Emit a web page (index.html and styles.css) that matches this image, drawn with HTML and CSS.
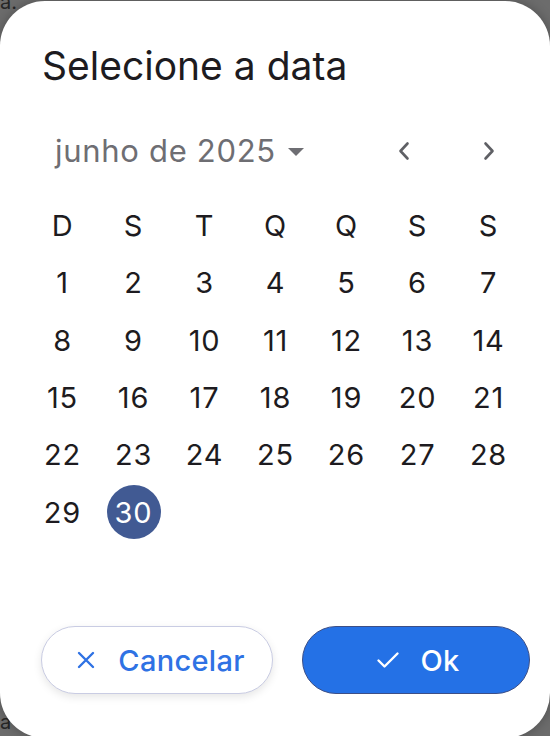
FILE: index.html
```html
<!DOCTYPE html>
<html lang="pt">
<head>
<meta charset="utf-8">
<title>Selecione a data</title>
<link rel="stylesheet" href="styles.css">
</head>
<body>
<div class="backdrop">
  <span class="bg-text bg-top">a.</span>
  <span class="bg-text bg-bottom">a</span>
</div>
<div class="dialog">
  <h1 class="title">Selecione a data</h1>
  <div class="month-row">
    <button class="month-select">
      <span>junho de 2025</span>
      <svg class="caret" width="16" height="8" viewBox="0 0 16 8"><path d="M0 0 L16 0 L8 8 Z" fill="#6e6e73"/></svg>
    </button>
    <div class="nav">
      <button class="nav-btn" aria-label="Mês anterior">
        <svg width="14" height="20" viewBox="0 0 14 20"><path d="M10.5 2.5 L3.5 10 L10.5 17.5" fill="none" stroke="#5f6065" stroke-width="2.6" stroke-linecap="round" stroke-linejoin="round"/></svg>
      </button>
      <button class="nav-btn" aria-label="Próximo mês">
        <svg width="14" height="20" viewBox="0 0 14 20"><path d="M3.5 2.5 L10.5 10 L3.5 17.5" fill="none" stroke="#5f6065" stroke-width="2.6" stroke-linecap="round" stroke-linejoin="round"/></svg>
      </button>
    </div>
  </div>
  <div class="grid">
    <div class="cell wd">D</div><div class="cell wd">S</div><div class="cell wd">T</div><div class="cell wd">Q</div><div class="cell wd">Q</div><div class="cell wd">S</div><div class="cell wd">S</div>
    <div class="cell">1</div><div class="cell">2</div><div class="cell">3</div><div class="cell">4</div><div class="cell">5</div><div class="cell">6</div><div class="cell">7</div>
    <div class="cell">8</div><div class="cell">9</div><div class="cell">10</div><div class="cell">11</div><div class="cell">12</div><div class="cell">13</div><div class="cell">14</div>
    <div class="cell">15</div><div class="cell">16</div><div class="cell">17</div><div class="cell">18</div><div class="cell">19</div><div class="cell">20</div><div class="cell">21</div>
    <div class="cell">22</div><div class="cell">23</div><div class="cell">24</div><div class="cell">25</div><div class="cell">26</div><div class="cell">27</div><div class="cell">28</div>
    <div class="cell">29</div><div class="cell"><span class="selected">30</span></div>
  </div>
  <div class="actions">
    <button class="btn btn-cancel">
      <svg width="20" height="20" viewBox="0 0 20 20"><path d="M3 3 L17 17 M17 3 L3 17" fill="none" stroke="#2f72e4" stroke-width="2.4" stroke-linecap="round"/></svg>
      <span>Cancelar</span>
    </button>
    <button class="btn btn-ok">
      <svg width="24" height="20" viewBox="0 0 24 20"><path d="M2.5 10.5 L8.5 16.5 L21.5 3.5" fill="none" stroke="#ffffff" stroke-width="2.4" stroke-linecap="round" stroke-linejoin="round"/></svg>
      <span>Ok</span>
    </button>
  </div>
</div>
</body>
</html>
```
FILE: styles.css
```css
html, body {
  margin: 0;
  padding: 0;
  width: 550px;
  height: 736px;
  overflow: hidden;
}
body {
  background: #6c6c6c;
  font-family: Inter, Roboto, "Noto Sans", sans-serif;
  position: relative;
}
.backdrop {
  position: absolute;
  inset: 0;
}
.bg-text {
  position: absolute;
  left: 0;
  color: #262626;
  font-size: 20px;
  line-height: 20px;
}
.bg-top { top: -8px; }
.bg-bottom { top: 712px; }

.dialog {
  position: relative;
  margin-top: 1px;
  width: 550px;
  height: 737px;
  box-sizing: border-box;
  background: #ffffff;
  border-radius: 45px;
  box-shadow: 0 0 12px rgba(0, 0, 0, 0.28);
  display: flex;
  flex-direction: column;
  padding: 41px 20px 44px 0;
}
.title {
  margin: 0 0 0 42px;
  font-size: 39px;
  line-height: 48px;
  font-weight: 400;
  color: #1d1b20;
}
.month-row {
  margin-top: 41px;
  height: 40px;
  display: flex;
  align-items: center;
  justify-content: space-between;
  padding-left: 55px;
  padding-right: 17px;
}
button {
  font-family: inherit;
  border: none;
  background: none;
  padding: 0;
  margin: 0;
  cursor: pointer;
}
.month-select {
  display: flex;
  align-items: center;
  gap: 12px;
  font-size: 31px;
  line-height: 40px;
  letter-spacing: 0.7px;
  color: #6e6e73;
}
.caret { margin-top: 2px; }
.nav {
  display: flex;
  gap: 37px;
}
.nav-btn {
  width: 48px;
  height: 40px;
  display: flex;
  align-items: center;
  justify-content: center;
}
.grid {
  margin-top: 26px;
  margin-left: 27px;
  width: 497px;
  display: grid;
  grid-template-columns: repeat(7, 71px);
  grid-auto-rows: 57.3px;
}
.cell {
  display: flex;
  align-items: center;
  justify-content: center;
  font-size: 29px;
  letter-spacing: 0.8px;
  color: #1d1b20;
}
.selected {
  width: 54px;
  height: 54px;
  border-radius: 50%;
  background: #415a93;
  color: #ffffff;
  display: flex;
  align-items: center;
  justify-content: center;
}
.actions {
  margin-top: auto;
  display: flex;
  gap: 29px;
  padding-left: 41px;
}
.btn {
  height: 68px;
  border-radius: 34px;
  display: flex;
  align-items: center;
  justify-content: center;
  gap: 22px;
  font-size: 29px;
  font-weight: 500;
  letter-spacing: 0.3px;
  box-sizing: border-box;
}
.btn-cancel {
  width: 232px;
  padding-left: 7px;
  background: #ffffff;
  color: #2f72e4;
  border: 1.5px solid #c9cce3;
  box-shadow: 0 3px 8px rgba(0, 0, 0, 0.10);
}
.btn-ok {
  width: 228px;
  padding-left: 4px;
  background: #2471e6;
  color: #ffffff;
  border: 1.5px solid #3d4f86;
  gap: 20px;
}
```
